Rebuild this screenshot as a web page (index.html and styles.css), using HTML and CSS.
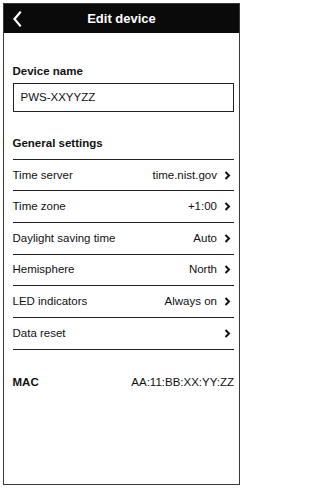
FILE: index.html
```html
<!DOCTYPE html>
<html>
<head>
<meta charset="utf-8">
<link rel="stylesheet" href="styles.css">
</head>
<body>
<div class="frame">
  <div class="header">
    <div class="back">
      <svg width="9" height="16" viewBox="0 0 9 16"><polyline points="7,1.5 1.5,8 7,14.5" fill="none" stroke="#fff" stroke-width="2.2" stroke-linecap="square" stroke-linejoin="miter"/></svg>
    </div>
    <div class="title">Edit device</div>
    <div></div>
  </div>
  <div class="content">
    <div class="label">Device name</div>
    <div class="input">PWS-XXYYZZ</div>
    <div class="section-title">General settings</div>
    <div class="row"><span>Time server</span><span class="val">time.nist.gov<svg class="chev" width="7" height="9" viewBox="0 0 7 9"><polyline points="1.5,1 5,4.5 1.5,8" fill="none" stroke="#111" stroke-width="2"/></svg></span></div>
    <div class="row"><span>Time zone</span><span class="val">+1:00<svg class="chev" width="7" height="9" viewBox="0 0 7 9"><polyline points="1.5,1 5,4.5 1.5,8" fill="none" stroke="#111" stroke-width="2"/></svg></span></div>
    <div class="row"><span>Daylight saving time</span><span class="val">Auto<svg class="chev" width="7" height="9" viewBox="0 0 7 9"><polyline points="1.5,1 5,4.5 1.5,8" fill="none" stroke="#111" stroke-width="2"/></svg></span></div>
    <div class="row"><span>Hemisphere</span><span class="val">North<svg class="chev" width="7" height="9" viewBox="0 0 7 9"><polyline points="1.5,1 5,4.5 1.5,8" fill="none" stroke="#111" stroke-width="2"/></svg></span></div>
    <div class="row"><span>LED indicators</span><span class="val">Always on<svg class="chev" width="7" height="9" viewBox="0 0 7 9"><polyline points="1.5,1 5,4.5 1.5,8" fill="none" stroke="#111" stroke-width="2"/></svg></span></div>
    <div class="row"><span>Data reset</span><span class="val"><svg class="chev" width="7" height="9" viewBox="0 0 7 9"><polyline points="1.5,1 5,4.5 1.5,8" fill="none" stroke="#111" stroke-width="2"/></svg></span></div>
    <div class="mac"><span class="label">MAC</span><span>AA:11:BB:XX:YY:ZZ</span></div>
  </div>
</div>
</body>
</html>
```
FILE: styles.css
```css
body {
  margin: 0;
  background: #fff;
  color: #111;
  font-family: "Liberation Sans", Arial, sans-serif;
}
.frame {
  margin: 3px 0 0 3px;
  width: 237px;
  height: 482px;
  box-sizing: border-box;
  border: 1px solid #3a3a3a;
}
.header {
  height: 29px;
  background: #0a0a0a;
  color: #fff;
  display: grid;
  grid-template-columns: 1fr auto 1fr;
  align-items: center;
}
.back {
  padding-left: 9px;
  display: flex;
  align-items: center;
}
.title {
  font-weight: bold;
  font-size: 13px;
  line-height: 15px;
}
.content {
  padding: 32.3px 5px 0 8.5px;
  font-size: 11.5px;
  line-height: 13px;
}
.label {
  font-weight: bold;
}
.input {
  margin-top: 4.5px;
  height: 29px;
  box-sizing: border-box;
  border: 1px solid #222;
  display: flex;
  align-items: center;
  padding-left: 7px;
}
.section-title {
  margin-top: 25.5px;
  font-weight: bold;
  padding-bottom: 8.4px;
  border-bottom: 1px solid #222;
}
.row {
  height: 31.67px;
  box-sizing: border-box;
  border-bottom: 1px solid #222;
  display: flex;
  align-items: center;
  justify-content: space-between;
}
.val {
  display: flex;
  align-items: center;
  gap: 7px;
}
.chev {
  margin-right: 3px;
  display: block;
}
.mac {
  margin-top: 26.4px;
  display: flex;
  justify-content: space-between;
}
```
